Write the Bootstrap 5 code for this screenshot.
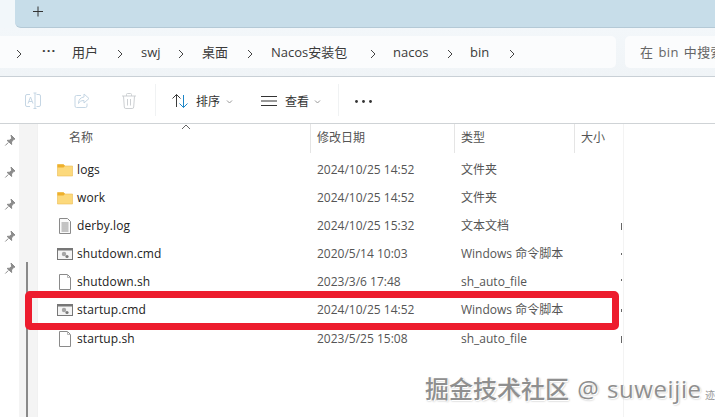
<!DOCTYPE html>
<html lang="zh">
<head>
<meta charset="utf-8">
<title>bin</title>
<link href="https://cdn.jsdelivr.net/npm/bootstrap@5.3.0/dist/css/bootstrap.min.css" rel="stylesheet">
<style>
html,body{width:715px;height:417px;overflow:hidden;margin:0;background:#fff}
body{font-family:"Open Sans","Noto Sans CJK SC",sans-serif;font-size:12px;color:#333;position:relative}
.tabstrip{height:28px;background:#f2f7fa;padding-left:15px}
.tabfill{height:28px;background:#c7dde9;border-bottom:1px solid #b4c9d6;border-bottom-left-radius:6px;padding:5px 0 0 16px;width:100%}
.tabfill svg{display:block}
.addrband{height:49px;background:linear-gradient(#f3f7fa,#f0f4f7);border-bottom:1px solid #c9d0d6;padding:8px 0 8px 0}
.crumbs{width:617px;height:32px;background:#fbfcfd;border-radius:0 5px 5px 0;font-size:13px;color:#3a3a3a;position:relative}
.crumbs>span{position:absolute;top:6px;line-height:20px;white-space:nowrap}
.searchbox{width:90px;height:32px;background:#fbfcfd;border-radius:5px 0 0 5px;font-size:13px;line-height:32px;color:#666;padding-left:15px;overflow:hidden;white-space:nowrap;margin-left:9px;word-spacing:1.500px;letter-spacing:.3px}
.cmdbar{height:47px;background:#fff;border-bottom:1px solid #cfd3d6;position:relative}
.cmdbar>*{position:absolute}
.cmdtext{font-size:12px;color:#333;top:16px;line-height:18px}
.vsep{width:1px;height:32px;top:7px;background:#f0f2f3}
.listarea{height:293px}
.pinrail{width:19px;padding-top:8px}
.pinrail svg{display:block;margin:0 0 14px 4px}
.scrolltrack{width:18px;background:#f4f4f4;position:relative}
.scrollthumb{width:2px;background:#8a8a8a;position:absolute;left:7px;top:138px;bottom:0}
.filepane{width:186px;flex:1 1 auto;position:relative;border-left:1px solid #f1f1f1}
.colhead{height:31px;position:relative;color:#555;font-size:12px}
.colhead span{position:absolute;top:5px;line-height:18px}
.colhead i{position:absolute;top:0;width:1px;height:29px;background:#e5e5e5}
.frow{height:28.1px;position:relative;color:#3c3c3c;white-space:nowrap;line-height:28px}
.frow>span,.frow>svg{position:absolute}
.frow svg{top:6px;left:19px}
.cname{left:39px;color:#222;letter-spacing:.1px}
.cdate{left:279px;color:#555}
.ctype{left:423px;color:#555}
.firstrow{margin-top:1px}
.endline{position:absolute;left:585px;top:0;bottom:0;width:1px;background:#f3f3f3}
.tick{position:absolute;left:583px;width:1px;height:7px;background:#666;top:11px}
.redbox{position:absolute;left:25px;top:291px;width:594px;height:39px;border:7.5px solid #ed1c2e;border-radius:5px}
.mark-wm{position:absolute;left:425px;top:374px;font-size:24px;line-height:30px;color:#8f8f8f;font-weight:500;white-space:nowrap;word-spacing:2px;text-shadow:1px 1px 0 #fff,-1px -1px 0 rgba(255,255,255,.8),1px 1px 2px rgba(0,0,0,.35)}
.mark-latin{letter-spacing:.6px}
.mark-tail{position:absolute;left:705px;top:388px;font-size:10px;color:#999;line-height:14px}
</style>
</head>
<body>
<div class="tabstrip"><div class="tabfill"><svg width="14" height="14" viewBox="0 0 14 14"><path d="M7 1.500v10M2 6.500h10" stroke="#333" stroke-width="1" fill="none"/></svg></div></div>

<div class="addrband d-flex">
  <div class="crumbs">
    <span style="left:15px"><svg width="8" height="10" viewBox="0 0 8 10"><path d="M2 1l4 4-4 4" stroke="#444" fill="none"/></svg></span>
    <span style="left:42px;font-weight:700;letter-spacing:1px;top:4px">···</span>
    <span style="left:72px">用户</span>
    <span style="left:116px"><svg width="8" height="10" viewBox="0 0 8 10"><path d="M2 1l4 4-4 4" stroke="#444" fill="none"/></svg></span>
    <span style="left:141px">swj</span>
    <span style="left:177px"><svg width="8" height="10" viewBox="0 0 8 10"><path d="M2 1l4 4-4 4" stroke="#444" fill="none"/></svg></span>
    <span style="left:202px">桌面</span>
    <span style="left:246px"><svg width="8" height="10" viewBox="0 0 8 10"><path d="M2 1l4 4-4 4" stroke="#444" fill="none"/></svg></span>
    <span style="left:271px">Nacos安装包</span>
    <span style="left:369px"><svg width="8" height="10" viewBox="0 0 8 10"><path d="M2 1l4 4-4 4" stroke="#444" fill="none"/></svg></span>
    <span style="left:393px">nacos</span>
    <span style="left:446px"><svg width="8" height="10" viewBox="0 0 8 10"><path d="M2 1l4 4-4 4" stroke="#444" fill="none"/></svg></span>
    <span style="left:470px">bin</span>
    <span style="left:508px"><svg width="8" height="10" viewBox="0 0 8 10"><path d="M2 1l4 4-4 4" stroke="#444" fill="none"/></svg></span>
  </div>
  <div class="searchbox">在 bin 中搜索</div>
</div>

<div class="cmdbar">
  <svg style="left:24px;top:15px" width="18" height="18" viewBox="0 0 18 18" fill="none" stroke="#c5d6e4"><path d="M6 2.500H3a1.500 1.500 0 0 0-1.500 1.500v9A1.500 1.500 0 0 0 3 14.500h3M12.500 2.500H15a1.500 1.500 0 0 1 1.500 1.500v9a1.500 1.500 0 0 1-1.500 1.500h-2.500M11 1v15.500M9.500 1h3M9.500 16.500h3M4 11.500l2.500-6.500 2.500 6.500M5 9.500h3"/></svg>
  <svg style="left:73px;top:15px" width="18" height="18" viewBox="0 0 18 18" fill="none" stroke="#c5d6e4"><path d="M8 3.500H3.500A1.500 1.500 0 0 0 2 5v9a1.500 1.500 0 0 0 1.500 1.500h9A1.500 1.500 0 0 0 14 14v-2.500"/><path d="M11 2l5 4.500-5 4.500V8.500c-3 0-4.500 1-5.500 3 0-4 2-6 5.500-6.500z"/></svg>
  <svg style="left:121px;top:15px" width="16" height="18" viewBox="0 0 16 18" fill="none" stroke="#cdd0d3"><path d="M1 4h14M5.500 4V2.500a1 1 0 0 1 1-1h3a1 1 0 0 1 1 1V4M2.500 4l.8 11a1.500 1.500 0 0 0 1.500 1.500h6.400a1.500 1.500 0 0 0 1.500-1.500l.8-11M6.500 7v6.500M9.500 7v6.500"/></svg>
  <div class="vsep" style="left:155px"></div>
  <svg style="left:171px;top:16px" width="18" height="16" viewBox="0 0 18 16" fill="none"><path d="M1.500 5.500L5.500 1.500l4 4M5.500 1.500V14" stroke="#3c3c3c"/><path d="M8.500 10.500l4 4 4-4M12.500 14.500V2" stroke="#1b86c8"/></svg>
  <span class="cmdtext" style="left:196px">排序</span>
  <svg style="left:226px;top:22px" width="7" height="6" viewBox="0 0 7 6" fill="none"><path d="M1 1.500l2.500 2.500L6 1.500" stroke="#999"/></svg>
  <svg style="left:261px;top:19px" width="16" height="10" viewBox="0 0 16 10" fill="none" stroke="#333"><path d="M0 .5h16M0 5h16M0 9.500h16"/></svg>
  <span class="cmdtext" style="left:285px">查看</span>
  <svg style="left:314px;top:22px" width="7" height="6" viewBox="0 0 7 6" fill="none"><path d="M1 1.500l2.500 2.500L6 1.500" stroke="#999"/></svg>
  <div class="vsep" style="left:338px"></div>
  <svg style="left:355px;top:23px" width="17" height="3" viewBox="0 0 17 3" fill="#333"><circle cx="1.500" cy="1.500" r="1.400"/><circle cx="8.500" cy="1.500" r="1.400"/><circle cx="15.500" cy="1.500" r="1.400"/></svg>
</div>

<div class="listarea d-flex">
  <div class="pinrail">
    <svg width="12" height="18" viewBox="0 0 11 18"><path d="M6.500 1l4 4-1.500.6-2 2.400.2 2.500L2.600 6.400l2.600-.2 2-2zM3.800 8.500L.8 11.500" fill="#8b8b8b" stroke="#8b8b8b" transform="translate(0 2)"/></svg>
    <svg width="12" height="18" viewBox="0 0 11 18"><path d="M6.500 1l4 4-1.500.6-2 2.400.2 2.500L2.600 6.400l2.600-.2 2-2zM3.800 8.500L.8 11.500" fill="#8b8b8b" stroke="#8b8b8b" transform="translate(0 2)"/></svg>
    <svg width="12" height="18" viewBox="0 0 11 18"><path d="M6.500 1l4 4-1.500.6-2 2.400.2 2.500L2.600 6.400l2.600-.2 2-2zM3.800 8.500L.8 11.500" fill="#8b8b8b" stroke="#8b8b8b" transform="translate(0 2)"/></svg>
    <svg width="12" height="18" viewBox="0 0 11 18"><path d="M6.500 1l4 4-1.500.6-2 2.400.2 2.500L2.600 6.400l2.600-.2 2-2zM3.800 8.500L.8 11.500" fill="#8b8b8b" stroke="#8b8b8b" transform="translate(0 2)"/></svg>
    <svg width="12" height="18" viewBox="0 0 11 18"><path d="M6.500 1l4 4-1.500.6-2 2.400.2 2.500L2.600 6.400l2.600-.2 2-2zM3.800 8.500L.8 11.500" fill="#8b8b8b" stroke="#8b8b8b" transform="translate(0 2)"/></svg>
  </div>
  <div class="scrolltrack"><div class="scrollthumb"></div></div>
  <div class="filepane">
    <div class="endline"></div>
    <div class="colhead">
      <svg style="position:absolute;left:143px;top:0" width="10" height="6" viewBox="0 0 10 6" fill="none"><path d="M1 5l4-4 4 4" stroke="#666"/></svg>
      <span style="left:31px">名称</span><i style="left:272px"></i>
      <span style="left:279px">修改日期</span><i style="left:416px"></i>
      <span style="left:423px">类型</span><i style="left:536px"></i>
      <span style="left:543px">大小</span>
    </div>
    <div class="frow firstrow"><svg width="16" height="16" viewBox="0 0 16 16"><path d="M.500 2.500h6l1.500 1.500h7.500v10H.500z" fill="#fcd97c" stroke="#ecbe55" stroke-width=".6"/><path d="M.500 2.500h6l1.500 1.500-1.500 1.500h-6z" fill="#eeb02c"/></svg><span class="cname">logs</span><span class="cdate">2024/10/25 14:52</span><span class="ctype">文件夹</span></div>
    <div class="frow"><svg width="16" height="16" viewBox="0 0 16 16"><path d="M.500 2.500h6l1.500 1.500h7.500v10H.500z" fill="#fcd97c" stroke="#ecbe55" stroke-width=".6"/><path d="M.500 2.500h6l1.500 1.500-1.500 1.500h-6z" fill="#eeb02c"/></svg><span class="cname">work</span><span class="cdate">2024/10/25 14:52</span><span class="ctype">文件夹</span></div>
    <div class="frow"><svg width="16" height="16" viewBox="0 0 16 16" fill="none"><path d="M2.500.500h8l3 3v12h-11z" fill="#fafafa" stroke="#8a8a8a"/><path d="M4.500 5h7M4.500 7h7M4.500 9h7M4.500 11h7M4.500 13h7" stroke="#8d8d8d"/></svg><span class="cname">derby.log</span><span class="cdate">2024/10/25 15:32</span><span class="ctype">文本文档</span><span class="tick"></span></div>
    <div class="frow"><svg width="16" height="16" viewBox="0 0 16 16" fill="none"><rect x=".5" y="2.500" width="15" height="11" fill="#f4f4f4" stroke="#777"/><path d="M.500 3.500h15" stroke="#777" stroke-width="2"/><circle cx="7" cy="8" r="2.200" fill="#a5a5a5"/><circle cx="10" cy="10.500" r="1.600" fill="#7a7a7a"/></svg><span class="cname">shutdown.cmd</span><span class="cdate">2020/5/14 10:03</span><span class="ctype">Windows 命令脚本</span><span class="tick" style="height:2px;top:13px"></span></div>
    <div class="frow"><svg width="16" height="16" viewBox="0 0 16 16" fill="none"><path d="M2.500.500h8l3 3v12h-11z" fill="#fff" stroke="#8a8a8a"/><path d="M10.500.500v3h3" stroke="#b5b5b5"/></svg><span class="cname">shutdown.sh</span><span class="cdate">2023/3/6 17:48</span><span class="ctype">sh_auto_file</span><span class="tick" style="height:2px;top:11px"></span></div>
    <div class="frow"><svg width="16" height="16" viewBox="0 0 16 16" fill="none"><rect x=".5" y="2.500" width="15" height="11" fill="#f4f4f4" stroke="#777"/><path d="M.500 3.500h15" stroke="#777" stroke-width="2"/><circle cx="7" cy="8" r="2.200" fill="#a5a5a5"/><circle cx="10" cy="10.500" r="1.600" fill="#7a7a7a"/></svg><span class="cname">startup.cmd</span><span class="cdate">2024/10/25 14:52</span><span class="ctype">Windows 命令脚本</span><span class="tick" style="height:3px;top:13px"></span></div>
    <div class="frow"><svg width="16" height="16" viewBox="0 0 16 16" fill="none"><path d="M2.500.500h8l3 3v12h-11z" fill="#fff" stroke="#8a8a8a"/><path d="M10.500.500v3h3" stroke="#b5b5b5"/></svg><span class="cname">startup.sh</span><span class="cdate">2023/5/25 15:08</span><span class="ctype">sh_auto_file</span><span class="tick"></span></div>
  </div>
</div>

<div class="redbox"></div>
<div class="mark-wm">掘金技术社区 @ <span class="mark-latin">suweijie</span></div>
<div class="mark-tail">迹</div>
</body>
</html>
